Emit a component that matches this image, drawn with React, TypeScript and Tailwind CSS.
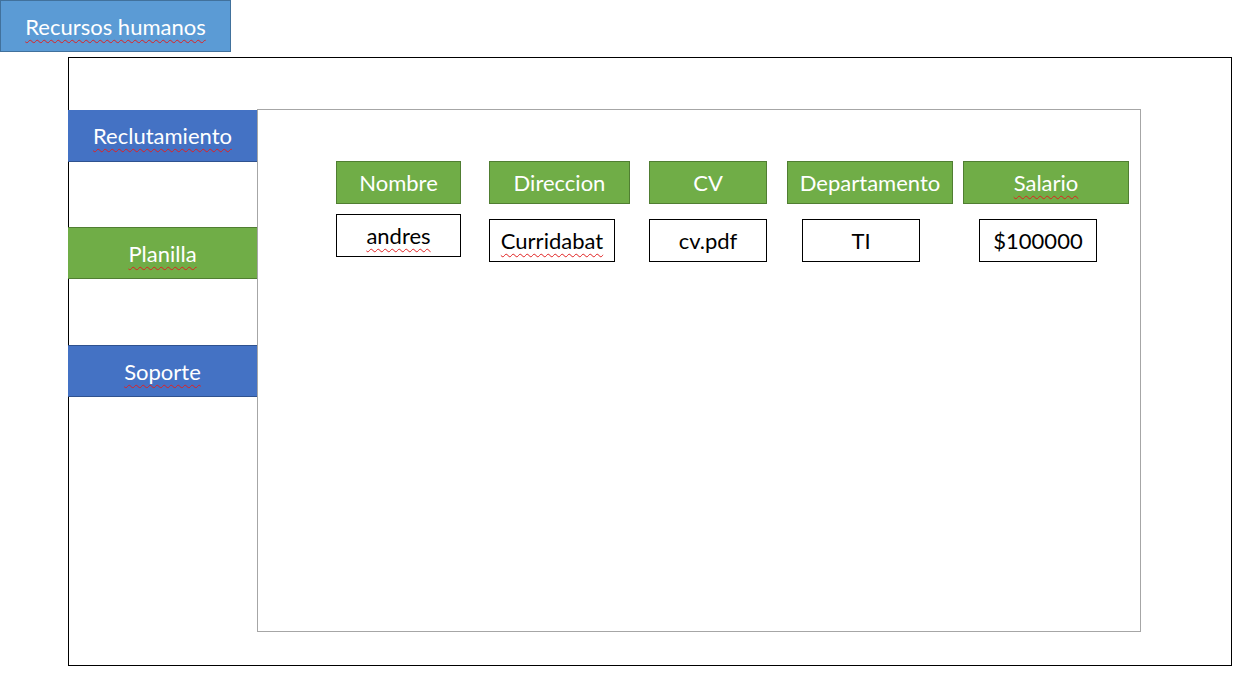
import React from "react";

const font = { fontFamily: "Lato, 'Noto Sans', sans-serif" };

const wavy = "underline decoration-wavy decoration-[#e02020] decoration-1 underline-offset-[4px]";

function Col({
  title,
  value,
  hw,
  dw,
  dml,
  dmt,
  titleWavy,
  valueWavy,
  gap,
}: {
  title: string;
  value: string;
  hw: string;
  dw: string;
  dml: string;
  dmt: string;
  titleWavy?: boolean;
  valueWavy?: boolean;
  gap: string;
}) {
  return (
    <div className={`flex flex-col ${gap}`}>
      <div className={`${hw} h-[43px] bg-[#70ad47] border border-[#507e32] flex items-center justify-center text-white text-[22px]`}>
        <span className={titleWavy ? wavy : ""}>{title}</span>
      </div>
      <div className={`${dw} ${dml} ${dmt} h-[43px] border border-black bg-white flex items-center justify-center text-black text-[22px]`}>
        <span className={valueWavy ? wavy : ""}>{value}</span>
      </div>
    </div>
  );
}

export default function App() {
  return (
    <div className="w-[1257px] h-[692px] bg-white overflow-hidden" style={font}>
      <div className="w-[231px] h-[52px] bg-[#5b9bd5] border border-[#41719c] flex items-center justify-center text-white text-[22px]">
        <span className={wavy}>Recursos humanos</span>
      </div>
      <div className="ml-[68px] mt-[5px] w-[1164px] h-[609px] border border-black">
        <div className="flex pt-[51px]">
          <div className="w-[189px] -ml-px flex flex-col">
            <div className="mt-px h-[52px] bg-[#4472c4] border-b border-[#2f528f] flex items-center justify-center text-white text-[22px]">
              <span className={wavy}>Reclutamiento</span>
            </div>
            <div className="mt-[65px] h-[52px] bg-[#70ad47] border-y border-[#507e32] flex items-center justify-center text-white text-[22px]">
              <span className={wavy}>Planilla</span>
            </div>
            <div className="mt-[66px] h-[52px] bg-[#4472c4] border-y border-[#2f528f] flex items-center justify-center text-white text-[22px]">
              <span className={wavy}>Soporte</span>
            </div>
          </div>
          <div className="w-[884px] h-[523px] border border-[#a6a6a6]">
            <div className="flex pt-[51px] pl-[78px]">
              <Col title="Nombre" value="andres" hw="w-[125px]" dw="w-[125px]" dml="ml-0" dmt="mt-[10px]" valueWavy gap="mr-[28px]" />
              <Col title="Direccion" value="Curridabat" hw="w-[141px]" dw="w-[126px]" dml="ml-0" dmt="mt-[15px]" valueWavy gap="mr-[19px]" />
              <Col title="CV" value="cv.pdf" hw="w-[118px]" dw="w-[118px]" dml="ml-0" dmt="mt-[15px]" gap="mr-[20px]" />
              <Col title="Departamento" value="TI" hw="w-[166px]" dw="w-[118px]" dml="ml-[15px]" dmt="mt-[15px]" gap="mr-[10px]" />
              <Col title="Salario" value="$100000" hw="w-[166px]" dw="w-[118px]" dml="ml-[16px]" dmt="mt-[15px]" titleWavy gap="mr-0" />
            </div>
          </div>
        </div>
      </div>
    </div>
  );
}
